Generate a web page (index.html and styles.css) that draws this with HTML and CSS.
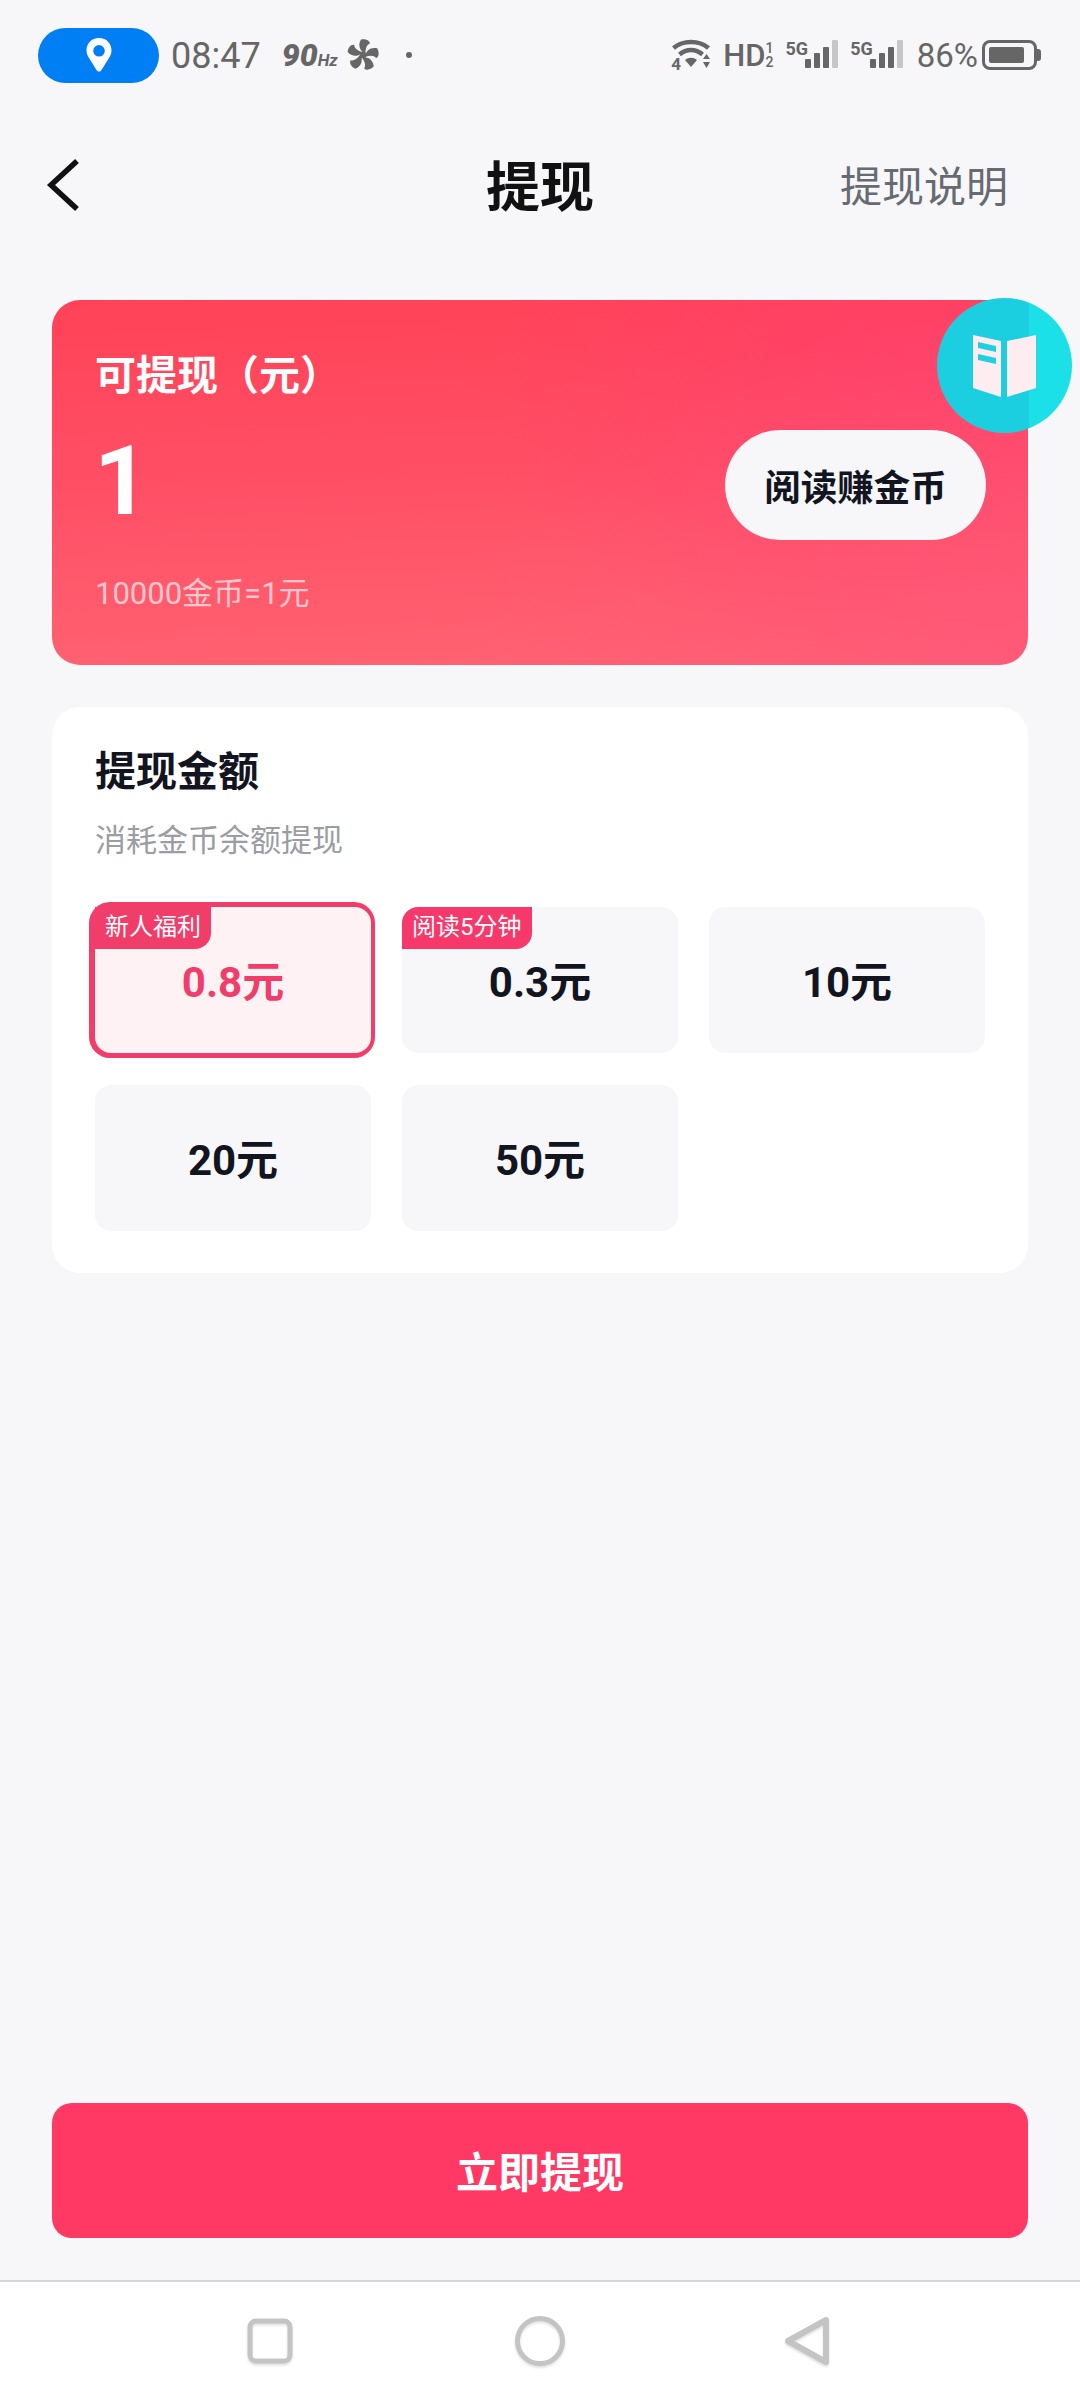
FILE: index.html
```html
<!DOCTYPE html>
<html lang="zh-CN">
<head>
    <meta charset="UTF-8">
    <meta name="viewport" content="width=device-width, initial-scale=1.0">
    <title>提现</title>
    <link rel="stylesheet" href="styles.css">
</head>

<body>
    <div id="page">
        <!--status bar-->
        <div class="status">
            <div class="status-left">
                <div class="loc-pill">
                    <svg width="28" height="36" viewBox="0 0 28 36"><path fill="#fff" fill-rule="evenodd" d="M14 1C6.500 1 1.500 6.500 1.500 13.500c0 3 1 5.200 2.500 7.500L11.500 33c1.200 2 3.800 2 5 0L24 21c1.500-2.300 2.500-4.500 2.500-7.500C26.500 6.500 21.500 1 14 1zm0 7a5.800 5.800 0 1 1 0 11.600A5.800 5.800 0 0 1 14 8z"/></svg>
                </div>
                <span class="time">08:47</span>
                <span class="hz"><b>90</b><i>Hz</i></span>
                <svg class="fan" width="32" height="32" viewBox="-16 -16 32 32" fill="#666">
                    <g id="blade"><path d="M1-2.500C-3-4-5.500-10-2-15.500C2-16.500 6.500-15 7-11.500C4-10.500 2.500-7 2.500-2.500z"/></g>
                    <use href="#blade" transform="rotate(72)"/>
                    <use href="#blade" transform="rotate(144)"/>
                    <use href="#blade" transform="rotate(216)"/>
                    <use href="#blade" transform="rotate(288)"/>
                    <circle r="3.500"/>
                </svg>
                <span class="dot"></span>
            </div>
            <div class="status-right">
                <div class="wifi">
                    <svg width="40" height="32" viewBox="0 0 40 32" fill="none">
                        <path d="M2.500 9C12 1 28 1 37.500 9" stroke="#666" stroke-width="4.500"/>
                        <path d="M8.500 15.500c7-6 16-6 23 0" stroke="#666" stroke-width="4.500"/>
                        <path d="M14 21c3.500-3 8.500-3 12 0l-6 7z" fill="#666"/>
                        <path d="M32 20l3.500-5 3.500 5zM32 23l3.500 6 3.500-6z" fill="#666"/>
                    </svg>
                    <span class="wifi-4">4</span>
                </div>
                <span class="hd">HD<span class="hd-frac"><span>1</span><span>2</span></span></span>
                <div class="signal">
                    <span class="net">5G</span>
                    <div class="bars"><i class="b1"></i><i class="b2"></i><i class="b3"></i><i class="b4"></i></div>
                </div>
                <div class="signal">
                    <span class="net">5G</span>
                    <div class="bars"><i class="b1"></i><i class="b2"></i><i class="b3"></i><i class="b4"></i></div>
                </div>
                <span class="batt-text">86%</span>
                <div class="battery"><div class="batt-fill"></div></div>
            </div>
        </div>

        <!--title bar-->
        <div class="nav">
            <div class="nav-back">
                <svg width="34" height="54" viewBox="0 0 34 54" fill="none"><path d="M31 3L5 27l26 24" stroke="#111" stroke-width="5.500"/></svg>
            </div>
            <h1 class="nav-title">提现</h1>
            <div class="nav-link">提现说明</div>
        </div>

        <div class="main">
            <div class="balance">
                <div class="balance-label">可提现（元）</div>
                <div class="balance-row">
                    <span class="balance-num">1</span>
                    <button class="read-btn" type="button">阅读赚金币</button>
                </div>
                <div class="balance-rate">10000金币=1元</div>
                <!--floating book badge-->
                <div class="book">
                    <svg width="64" height="62" viewBox="0 0 64 62">
                        <path fill="#fdecf0" d="M0 0l28 6v56L0 53z"/>
                        <path fill="#fdecf0" d="M34 6l29-6v53L34 62z"/>
                        <path fill="#1fd0e0" d="M5 7l18 4v6L5 13zM5 19l18 4v6L5 25z"/>
                    </svg>
                </div>
            </div>

            <div class="amounts">
                <h2 class="amounts-title">提现金额</h2>
                <p class="amounts-sub">消耗金币余额提现</p>
                <div class="amount-grid">
                    <div class="tile active"><span class="tag">新人福利</span>0.8元</div>
                    <div class="tile"><span class="tag">阅读5分钟</span>0.3元</div>
                    <div class="tile">10元</div>
                    <div class="tile">20元</div>
                    <div class="tile">50元</div>
                </div>
            </div>
        </div>

        <button class="cta" type="button">立即提现</button>

        <!--system nav-->
        <div class="sysnav">
            <div class="sys-cell">
                <svg width="50" height="50" viewBox="0 0 50 50" fill="none"><rect x="5" y="5" width="40" height="40" rx="6" stroke="#c4c4c4" stroke-width="5"/></svg>
            </div>
            <div class="sys-cell">
                <svg width="54" height="54" viewBox="0 0 54 54" fill="none"><circle cx="27" cy="27" r="22.500" stroke="#c4c4c4" stroke-width="5"/></svg>
            </div>
            <div class="sys-cell tri">
                <svg width="50" height="50" viewBox="0 0 50 50" fill="none"><path d="M5 25L43 4v42z" stroke="#c4c4c4" stroke-width="6" stroke-linejoin="round"/></svg>
            </div>
        </div>
    </div>
</body>
</html>
```

FILE: styles.css
```css
* {
    box-sizing: border-box;
}
body {
    margin: 0;
    background-color: #f7f7fa;
    font-family: Roboto, "Noto Sans CJK SC", sans-serif;
    color: #12151f;
}
#page {
    width: 1080px;
    height: 2400px;
    display: flex;
    flex-direction: column;
}

/* status bar */
.status {
    height: 110px;
    padding: 0 43px 0 38px;
    display: flex;
    justify-content: space-between;
    align-items: center;
    color: #666;
}
.status-left,
.status-right {
    display: flex;
    align-items: center;
}
.loc-pill {
    width: 121px;
    height: 55px;
    border-radius: 28px;
    background-color: #007ff4;
    display: flex;
    justify-content: center;
    align-items: center;
}
.time {
    margin-left: 12px;
    padding-top: 2px;
    font-size: 36px;
}
.hz {
    margin-left: 21px;
    font-style: italic;
    font-weight: 700;
}
.hz b {
    font-size: 32px;
}
.hz i {
    font-size: 17px;
}
.fan {
    margin-left: 9px;
}
.dot {
    width: 6px;
    height: 6px;
    margin-left: 27px;
    border-radius: 50%;
    background-color: #666;
}
.wifi {
    position: relative;
    height: 32px;
    display: flex;
}
.wifi-4 {
    position: absolute;
    left: 0;
    bottom: -3px;
    font-size: 17px;
    font-weight: 700;
    line-height: 20px;
}
.hd {
    margin-left: 12px;
    display: flex;
    align-items: center;
    font-size: 31px;
    font-weight: 500;
}
.hd-frac {
    display: flex;
    flex-direction: column;
    font-size: 14px;
    line-height: 14px;
}
.signal {
    margin-left: 12px;
    display: flex;
    align-items: flex-start;
    height: 30px;
}
.net {
    font-size: 18px;
    font-weight: 700;
    line-height: 18px;
}
.bars {
    margin-left: -3px;
    height: 28px;
    display: flex;
    align-items: flex-end;
    gap: 3px;
}
.bars i {
    width: 6px;
    background-color: #666;
    border-radius: 1px;
}
.bars .b1 {
    height: 9px;
}
.bars .b2 {
    height: 15px;
}
.bars .b3 {
    height: 21px;
}
.bars .b4 {
    height: 28px;
    background-color: #c6c6c8;
}
.batt-text {
    margin-left: 14px;
    font-size: 33px;
}
.battery {
    position: relative;
    width: 55px;
    height: 30px;
    margin-left: 4px;
    padding: 4px;
    border: 3px solid #666;
    border-radius: 8px;
}
.battery::after {
    content: "";
    position: absolute;
    right: -7px;
    top: 6px;
    width: 4px;
    height: 12px;
    background-color: #666;
    border-radius: 0 3px 3px 0;
}
.batt-fill {
    width: 86%;
    height: 100%;
    background-color: #666;
    border-radius: 2px;
}

/* title bar */
.nav {
    height: 147px;
    padding: 0 46px;
    display: grid;
    grid-template-columns: 1fr auto 1fr;
    align-items: center;
}
.nav-back {
    display: flex;
    margin-top: 3px;
}
.nav-title {
    margin: 0;
    font-size: 54px;
    font-weight: 700;
    color: #111;
}
.nav-link {
    margin-right: 26px;
    text-align: right;
    font-size: 42px;
    color: #666a73;
}

.main {
    flex: 1;
    padding: 43px 52px 0;
}

/* balance card */
.balance {
    position: relative;
    height: 365px;
    padding: 51px 42px 0 43px;
    border-radius: 28px;
    color: #fff;
    background:
        radial-gradient(ellipse 560px 360px at 100% 100%, rgba(255, 86, 122, 0.75), rgba(255, 86, 122, 0) 100%),
        radial-gradient(ellipse 420px 300px at 88% 18%, rgba(255, 62, 108, 0.7), rgba(255, 62, 108, 0) 100%),
        linear-gradient(178deg, #ff4257 0%, #ff5066 50%, #ff6473 100%);
}
.balance-label {
    font-size: 41px;
    font-weight: 700;
    line-height: 50px;
}
.balance-row {
    height: 120px;
    margin-top: 24px;
    display: flex;
    justify-content: space-between;
    align-items: center;
}
.balance-num {
    margin: 0 0 8px -1px;
    font-size: 96px;
    font-weight: 700;
}
.read-btn {
    width: 261px;
    height: 110px;
    padding: 0;
    border: none;
    border-radius: 55px;
    background-color: #f7f7fa;
    color: #12151f;
    font-family: inherit;
    font-size: 36.500px;
    font-weight: 700;
}
.balance-rate {
    margin-top: 31px;
    font-size: 31px;
    line-height: 36px;
    color: rgba(255, 255, 255, 0.68);
}
.book {
    position: absolute;
    top: -2px;
    right: -44px;
    width: 135px;
    height: 135px;
    border-radius: 50%;
    background: linear-gradient(90deg, #1ccfe0 68%, #1be0e8 68%);
    display: flex;
    justify-content: center;
    align-items: center;
}

/* amounts */
.amounts {
    height: 566px;
    margin-top: 42px;
    padding: 40px 43px 0;
    background-color: #fff;
    border-radius: 28px;
}
.amounts-title {
    margin: 0;
    font-size: 41px;
    font-weight: 700;
    line-height: 50px;
}
.amounts-sub {
    margin: 24px 0 0;
    font-size: 31px;
    line-height: 40px;
    color: #9a9da3;
}
.amount-grid {
    margin-top: 46px;
    display: grid;
    grid-template-columns: repeat(3, 276px);
    grid-auto-rows: 146px;
    column-gap: 31px;
    row-gap: 32px;
}
.tile {
    position: relative;
    padding-bottom: 3px;
    display: flex;
    justify-content: center;
    align-items: center;
    background-color: #f7f7fa;
    border-radius: 16px;
    font-size: 42px;
    font-weight: 700;
}
.tile.active {
    background-color: #fef2f5;
    color: #f03d6a;
    box-shadow: -1px 0 0 5px #f03d6a;
}
.tag {
    position: absolute;
    left: 0;
    top: 0;
    height: 42px;
    padding: 0 10px;
    background-color: #f6386a;
    border-radius: 16px 0 16px 0;
    color: #fff;
    font-size: 24px;
    font-weight: 400;
    line-height: 40px;
}
.tile.active .tag {
    background-color: #f03d6a;
    border-top-left-radius: 0;
}

/* bottom button */
.cta {
    height: 135px;
    margin: 0 52px 42px;
    padding: 0 0 3px;
    border: none;
    border-radius: 20px;
    background-color: #ff3864;
    color: #fff;
    font-family: inherit;
    font-size: 42px;
    font-weight: 700;
}

/* system nav */
.sysnav {
    height: 120px;
    background-color: #fff;
    border-top: 2px solid #d5d5da;
    display: flex;
    justify-content: center;
    align-items: center;
}
.sys-cell {
    width: 270px;
    display: flex;
    justify-content: center;
}
.sys-cell.tri {
    padding-right: 4px;
}
.sys-cell svg {
    filter: drop-shadow(0 2px 1px rgba(0, 0, 0, 0.12));
}
```
